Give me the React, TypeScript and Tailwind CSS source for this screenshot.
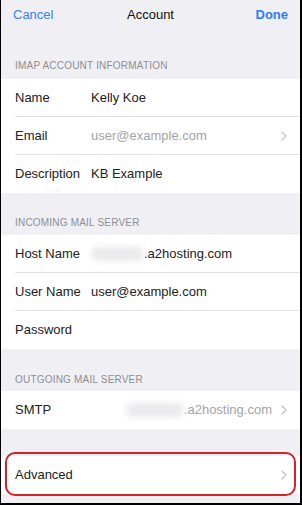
import React from 'react';

type Row = {
  label: string;
  value?: string;
  muted?: boolean;
  blur?: number;
  chevron?: boolean;
  right?: boolean;
};

function Chevron() {
  return (
    <svg width="6" height="10" viewBox="0 0 6 10" className="shrink-0">
      <path d="M1 1l4 4-4 4" fill="none" stroke="#c4c4c9" strokeWidth="1.3" strokeLinecap="round" strokeLinejoin="round" />
    </svg>
  );
}

function Blurred({ width }: { width: number }) {
  return (
    <span className="relative inline-block h-[18px] align-middle" style={{ width }}>
      <span className="absolute inset-x-[1px] inset-y-[2px] rounded-sm bg-[#eaeaec] blur-[3px]" />
    </span>
  );
}

function SectionHeader({ title, className }: { title: string; className: string }) {
  return (
    <div className={`flex shrink-0 items-end px-[14px] ${className}`}>
      <span className="text-[10px] leading-[12px] tracking-[0.2px] text-[#8e8e93]">{title}</span>
    </div>
  );
}

function Section({ rows }: { rows: Row[] }) {
  return (
    <div className="bg-white">
      {rows.map((row, i) => (
        <div key={row.label} className="pl-[14px]">
          <div
            className={`flex h-[38px] items-center pr-[13px] ${
              i < rows.length - 1 ? 'border-b border-[#e3e3e6]' : ''
            }`}
          >
            <span className="w-[76px] shrink-0 text-[13px] text-[#222]">{row.label}</span>
            <div className={`flex flex-1 items-center ${row.right ? 'justify-end' : ''}`}>
              {row.blur ? <Blurred width={row.blur} /> : null}
              {row.value && (
                <span className={`text-[13px] ${row.muted ? 'text-[#a3a3a8]' : 'text-[#222]'}`}>
                  {row.value}
                </span>
              )}
              {!row.right && <div className="flex-1" />}
            </div>
            {row.chevron && (
              <div className={row.right ? 'ml-[9px]' : ''}>
                <Chevron />
              </div>
            )}
          </div>
        </div>
      ))}
    </div>
  );
}

export default function App() {
  return (
    <div
      className="flex h-[505px] w-[302px] flex-col overflow-hidden border-b-2 border-l border-r-2 border-black bg-[#efeff4]"
      style={{ fontFamily: '"Liberation Sans", Arial, sans-serif' }}
    >
      {/* Barra de navegação */}
      <div className="relative flex h-[30px] shrink-0 items-center justify-between px-[12px]">
        <span className="text-[13px] text-[#3b82f6]">Cancel</span>
        <span className="absolute left-1/2 -translate-x-1/2 text-[13px] text-[#111]">Account</span>
        <span className="text-[13px] font-semibold text-[#2f7cf6]">Done</span>
      </div>

      <SectionHeader title="IMAP ACCOUNT INFORMATION" className="h-[49px] pb-[7px]" />
      <Section
        rows={[
          { label: 'Name', value: 'Kelly Koe' },
          { label: 'Email', value: 'user@example.com', muted: true, chevron: true },
          { label: 'Description', value: 'KB Example' },
        ]}
      />

      <SectionHeader title="INCOMING MAIL SERVER" className="h-[42px] pb-[6px]" />
      <Section
        rows={[
          { label: 'Host Name', value: '.a2hosting.com', blur: 53 },
          { label: 'User Name', value: 'user@example.com' },
          { label: 'Password' },
        ]}
      />

      <SectionHeader title="OUTGOING MAIL SERVER" className="h-[42px] pb-[5px]" />
      <Section
        rows={[{ label: 'SMTP', value: '.a2hosting.com', muted: true, blur: 58, chevron: true, right: true }]}
      />

      <div className="h-[27px] shrink-0" />

      {/* Linha destacada */}
      <div className="relative">
        <Section rows={[{ label: 'Advanced', chevron: true }]} />
        <div className="pointer-events-none absolute -top-[4px] -bottom-[2px] left-[4px] right-[4px] rounded-[10px] border-2 border-[#d2232a]" />
      </div>
    </div>
  );
}
